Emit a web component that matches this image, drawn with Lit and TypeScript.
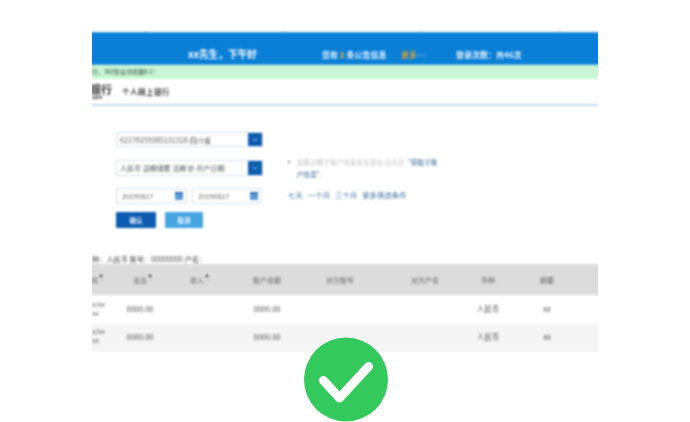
import { LitElement, html, css } from "lit";
import { customElement } from "lit/decorators.js";

const COLS = ["支出", "收入", "账户余额", "对方账号", "对方户名", "币种", "摘要"];
const SORTABLE = new Set(["支出", "收入"]);

@customElement("app-root")
export class AppRoot extends LitElement {
  static styles = css`
    :host { display: block; position: relative; width: 690px; height: 422px; overflow: hidden; background: #fff;
      font-family: "Noto Sans CJK SC", "Liberation Sans", sans-serif; color: #555; }
    .clip { width: 506px; height: 322px; margin: 30px 0 0 92px; overflow: hidden; }
    .shot { width: 526px; margin-left: -10px; height: 340px; filter: blur(0.8px); }
    .ticks { height: 2px; display: flex; padding-left: 63px; gap: 137px; }
    .ticks i { width: 1px; height: 2px; background: #ccc; }
    .top { height: 33px; box-sizing: border-box; background: #0a7fd6; border-top: 1px solid #3f9fe6; border-bottom: 1px solid #3f9fe6; color: #e8f4fd;
      display: flex; align-items: center; padding: 11px 0 0 106px; font-size: 8px; font-weight: 700; }
    .hello { width: 134px; font-size: 9.7px; color: #fff; white-space: nowrap; }
    .notice { width: 79px; white-space: nowrap; }
    .notice b { color: #e8b23a; }
    .more { width: 55px; color: #e0a32e; white-space: nowrap; }
    .more span { color: #6fb4e8; font-weight: 400; }
    .green { height: 14px; background: #c9f5d5; font-size: 6px; line-height: 14px; padding-left: 10px; color: #2f4a38; white-space: nowrap; }
    .brand { height: 25px; border-bottom: 2px solid #bedcf6; display: flex; align-items: center; padding-left: 10px; }
    .logo { width: 22px; margin-left: -2px; font-size: 11px; font-weight: 700; line-height: 10px; color: #333; white-space: nowrap; }
    .logo small { display: block; font-size: 4px; line-height: 4px; margin-top: 1px; padding-left: 2px; }
    .brand .title { font-size: 7.5px; font-weight: 700; color: #444; letter-spacing: 0.5px; margin-left: 10px; }
    .form { display: flex; padding: 26px 0 0 34px; height: 148px; box-sizing: border-box; }
    .fields { width: 172px; display: flex; flex-direction: column; }
    .select { width: 147px; height: 15px; box-sizing: border-box; border: 1px solid #cfe0f0; display: flex; align-items: center; justify-content: space-between; font-size: 7.2px; padding-left: 3px; color: #555; white-space: nowrap; margin-bottom: 13px; }
    .select.two { height: 16px; margin-bottom: 12px; font-size: 7px; }
    .arrow { width: 14px; height: 100%; background: #0d5cb0; display: flex; align-items: center; justify-content: center; }
    .dates { display: flex; gap: 5px; margin-bottom: 8px; }
    .date { width: 71px; height: 16px; box-sizing: border-box; border: 1px solid #d8e5f1; display: flex; align-items: center; justify-content: space-between; font-size: 7px; padding: 0 3px 0 5px; color: #666; }
    .date:last-child { width: 70px; }
    .date i { width: 8px; height: 8px; background: #5b9bd8; border-top: 2px solid #2f6fb5; box-sizing: border-box; }
    .btns { display: flex; gap: 9px; }
    .btn { width: 40px; height: 16px; background: #0b5cb2; color: #f2f7fc; font-size: 6.5px; font-weight: 700; display: flex; align-items: center; justify-content: center; border-radius: 1px; }
    .btn.alt { width: 38px; background: #45a5e0; }
    .side { padding-top: 24px; width: 180px; font-size: 6.6px; line-height: 12px; color: #c4c4c4; }
    .note { padding-left: 9px; position: relative; width: 144px; }
    .note::before { content: ""; position: absolute; left: 0; top: 5px; width: 2px; height: 2px; background: #888; }
    .note b { color: #4f7ca6; font-weight: 500; }
    .links { display: flex; gap: 5px; margin-top: 9px; font-size: 7.4px; color: #3f72a0; white-space: nowrap; }
    .cap { font-size: 7.2px; line-height: 10px; height: 10px; padding-left: 10px; color: #444; white-space: nowrap; }
    .grid { display: grid; grid-template-columns: 30px 56px 58px 82px 64px 106px 20px 98px 32px; justify-items: center; align-items: center; }
    .grid > * { white-space: nowrap; }
    .head { background: #dcdcdc; height: 31px; font-size: 7px; color: #666; }
    .row { height: 29px; box-sizing: border-box; padding-bottom: 2px; font-size: 7.5px; color: #505050; }
    .row.alt { height: 27px; background: #f5f5f5; border-bottom: 1px solid #e8e8e8; }
    .stub { justify-self: start; font-size: 6.8px; line-height: 9px; padding-left: 10px; }
    .headstub { justify-self: start; padding-left: 9px; }
    .sorted { position: relative; }
    .sorted::before { content: ""; position: absolute; right: -5px; top: -1px; border: 2px solid transparent; border-top: 0; border-bottom: 3px solid #444; }
    .sorted::after { content: ""; position: absolute; right: -5px; top: 4px; border: 1.5px solid transparent; border-bottom: 0; border-top: 2px solid #aaa; }
    .badge { position: absolute; left: 304px; top: 337px; width: 84px; height: 85px; }
  `;

  private row(alt: boolean) {
    return html`<div class="grid row ${alt ? "alt" : ""}">
      <div class="stub">x/xx<br />xx</div>
      <div>0000.00</div><div></div><div>0000.00</div><div></div><div></div>
      <div>人民币</div><div>xx</div><div></div>
    </div>`;
  }

  render() {
    return html`
      <div class="clip">
        <div class="shot">
          <div class="ticks"><i></i><i></i><i></i><i></i></div>
          <div class="top">
            <div class="hello">xx先生，下午好</div>
            <div class="notice">您有 <b>2</b> 条公告信息</div>
            <div class="more">更多<span>&gt;&gt;</span></div>
            <div>登录次数：共46次</div>
          </div>
          <div class="green">行，360安全浏览器8.1!</div>
          <div class="brand">
            <div class="logo">银行<small>Bank</small></div>
            <div class="title">个人网上银行</div>
          </div>
          <div class="form">
            <div class="fields">
              <div class="select"><span>62178255585131318 四川省</span><span class="arrow">${this.chev()}</span></div>
              <div class="select two"><span>人民币 活期储蓄 活期 钞 开户日期:</span><span class="arrow">${this.chev()}</span></div>
              <div class="dates">
                <div class="date">20190817<i></i></div>
                <div class="date">20190817<i></i></div>
              </div>
              <div class="btns"><div class="btn">确认</div><div class="btn alt">取消</div></div>
            </div>
            <div class="side">
              <div class="note">如果近期子账户信息发生变动,请点击<b>“获取子账户信息”</b>。</div>
              <div class="links"><span>七天</span><span>一个月</span><span>三个月</span><span>更多筛选条件</span></div>
            </div>
          </div>
          <div class="cap">种：人民币 账号：00000000 户名：</div>
          <div class="grid head">
            <div class="headstub"><span class="sorted">间</span></div>
            ${COLS.map((c) => html`<div><span class=${SORTABLE.has(c) ? "sorted" : ""}>${c}</span></div>`)}
            <div></div>
          </div>
          ${this.row(false)}
          ${this.row(true)}
        </div>
      </div>
      <svg class="badge" viewBox="0 0 84 85">
        <circle cx="42" cy="42.5" r="42" fill="#34c95c"></circle>
        <path d="M19.5 43.5 L35.5 61 L64.5 29.5" fill="none" stroke="#fff" stroke-width="9" stroke-linecap="round" stroke-linejoin="round"></path>
      </svg>
    `;
  }

  private chev() {
    return html`<svg width="6" height="4" viewBox="0 0 6 4"><path d="M0.5 0.5 L3 3 L5.5 0.5" fill="none" stroke="#9cc3ea" stroke-width="1"></path></svg>`;
  }
}
